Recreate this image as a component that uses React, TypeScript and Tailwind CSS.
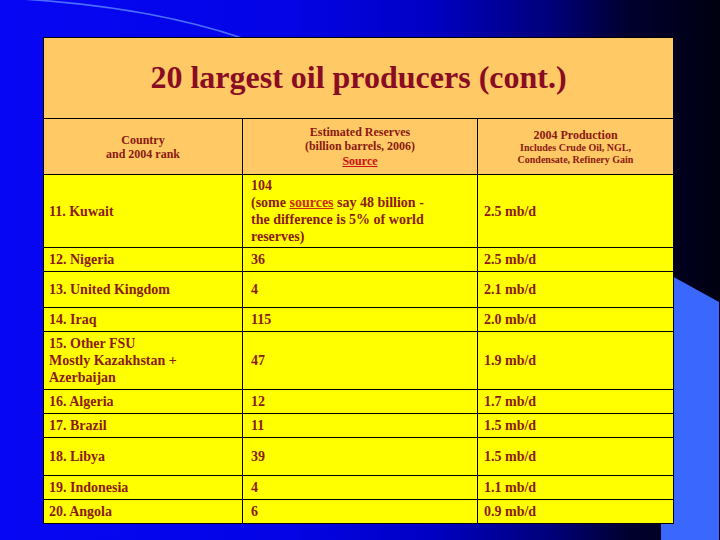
import React from "react";

const rows: { c: React.ReactNode; r: React.ReactNode; p: string; h: number }[] = [
  {
    c: "11. Kuwait",
    r: (
      <>
        104
        <br />
        (some <span className="text-[#cc2a10] underline">sources</span> say 48 billion -
        <br />
        the difference is 5% of world
        <br />
        reserves)
      </>
    ),
    p: "2.5 mb/d",
    h: 73,
  },
  { c: "12. Nigeria", r: "36", p: "2.5 mb/d", h: 24 },
  { c: "13. United Kingdom", r: "4", p: "2.1 mb/d", h: 36 },
  { c: "14. Iraq", r: "115", p: "2.0 mb/d", h: 24 },
  {
    c: (
      <>
        15. Other FSU
        <br />
        Mostly Kazakhstan +
        <br />
        Azerbaijan
      </>
    ),
    r: "47",
    p: "1.9 mb/d",
    h: 58,
  },
  { c: "16. Algeria", r: "12", p: "1.7 mb/d", h: 24 },
  { c: "17. Brazil", r: "11", p: "1.5 mb/d", h: 24 },
  { c: "18. Libya", r: "39", p: "1.5 mb/d", h: 38 },
  { c: "19. Indonesia", r: "4", p: "1.1 mb/d", h: 24 },
  { c: "20. Angola", r: "6", p: "0.9 mb/d", h: 24 },
];

export default function App() {
  return (
    <div
      className="relative w-[720px] h-[540px] overflow-hidden bg-[linear-gradient(to_right,#0606f4_0%,#0404e6_40%,#0000c4_60%,#000078_77%,#000030_87%,#000010_100%)]"
      style={{ fontFamily: '"Liberation Serif", "Times New Roman", serif' }}
    >
      <svg className="absolute left-0 top-0" width="720" height="540" viewBox="0 0 720 540">
        <path d="M 22 -1 Q 150 7 242 38" fill="none" stroke="#4a6cff" strokeWidth="1.6" />
        <polygon points="661,270 719,302 719,540 661,540" fill="#3a68ff" />
      </svg>
      <div className="relative pt-[37px] pl-[43px]">
        <table className="border-collapse border border-black text-[#8b1a12] font-bold w-[630px] table-fixed">
          <colgroup>
            <col className="w-[199px]" />
            <col className="w-[235px]" />
            <col className="w-[196px]" />
          </colgroup>
          <tbody>
            <tr>
              <td colSpan={3} className="h-[81px] bg-[#ffc966] border border-black text-center align-middle">
                <span className="text-[32px] text-[#8a0c22] leading-none">20 largest oil producers (cont.)</span>
              </td>
            </tr>
            <tr className="bg-[#ffc966]">
              <td className="h-[56px] border border-black text-center align-middle text-[12px] leading-[14px]">
                Country
                <br />
                and 2004 rank
              </td>
              <td className="border border-black text-center align-middle text-[12px] leading-[14.5px]">
                Estimated Reserves
                <br />
                (billion barrels, 2006)
                <br />
                <span className="text-[#d01010] underline">Source</span>
              </td>
              <td className="border border-black text-center align-middle">
                <div className="text-[12px] leading-[14px]">2004 Production</div>
                <div className="text-[10px] leading-[12px]">
                  Includes Crude Oil, NGL,
                  <br />
                  Condensate, Refinery Gain
                </div>
              </td>
            </tr>
            {rows.map((row, i) => (
              <tr key={i} className="bg-[#ffff00] text-[14px] leading-[17px]">
                <td className="border border-black align-middle pl-[5px]" style={{ height: row.h }}>
                  {row.c}
                </td>
                <td className="border border-black align-middle pl-[8px]">{row.r}</td>
                <td className="border border-black align-middle pl-[6px]">{row.p}</td>
              </tr>
            ))}
          </tbody>
        </table>
      </div>
    </div>
  );
}
